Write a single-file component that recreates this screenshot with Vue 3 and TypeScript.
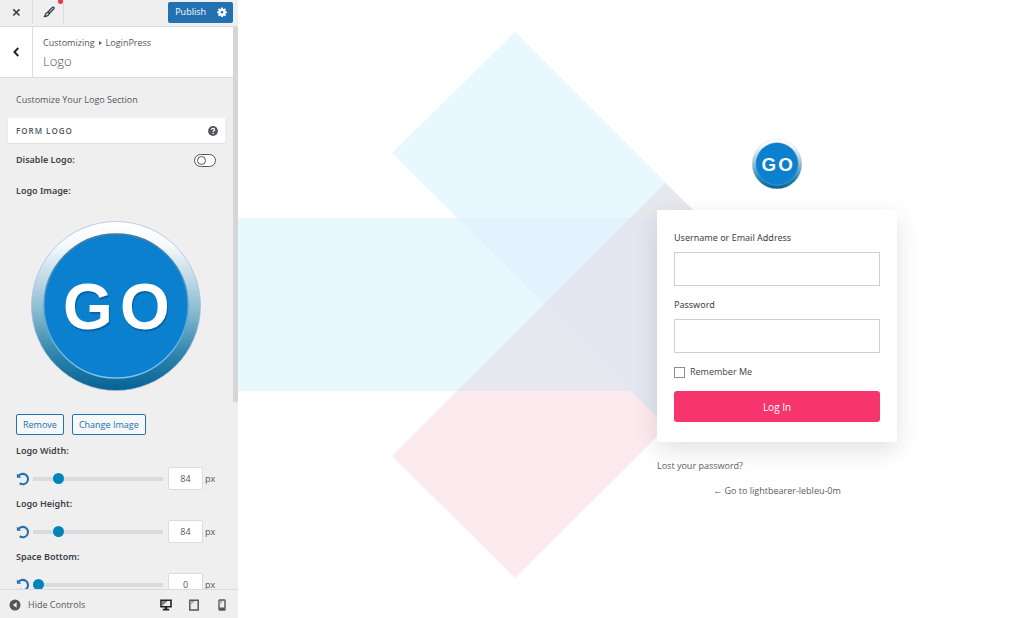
<script setup lang="ts">
import { ref } from 'vue'

interface SliderControl {
  id: string
  label: string
  value: number
  max: number
}

const sliders = ref<SliderControl[]>([
  { id: 'logo-width', label: 'Logo Width:', value: 84, max: 500 },
  { id: 'logo-height', label: 'Logo Height:', value: 84, max: 500 },
  { id: 'space-bottom', label: 'Space Bottom:', value: 0, max: 100 },
])
const defaults = sliders.value.map((s) => s.value)

const logoDisabled = ref(false)
const username = ref('')
const password = ref('')
const remember = ref(false)

function reset(index: number): void {
  sliders.value[index].value = defaults[index]
}
</script>

<template>
  <div class="app">
    <svg class="defs" width="0" height="0" aria-hidden="true">
      <defs>
        <linearGradient id="ring" x1="0" y1="0" x2="0" y2="1">
          <stop offset="0" stop-color="#ffffff" />
          <stop offset="0.14" stop-color="#f4f9fc" />
          <stop offset="0.5" stop-color="#93c0d4" />
          <stop offset="0.78" stop-color="#2f86ad" />
          <stop offset="1" stop-color="#066295" />
        </linearGradient>
        <linearGradient id="rim" x1="0" y1="0" x2="0" y2="1">
          <stop offset="0" stop-color="#47789c" />
          <stop offset="0.5" stop-color="#4f9fd0" />
          <stop offset="1" stop-color="#7cc4f2" />
        </linearGradient>
        <symbol id="go" viewBox="0 0 170 170">
          <circle cx="85" cy="85" r="84.5" fill="url(#ring)" stroke="#a9b9dc" stroke-opacity="0.7" />
          <circle cx="85" cy="85" r="72" fill="#0a80cf" stroke="url(#rim)" stroke-width="1.4" />
          <g font-family="'Liberation Sans', Arial, sans-serif" font-weight="700" font-size="64">
            <text x="33 90" y="110" fill="#075894" fill-opacity="0.7">GO</text>
            <text x="32 89" y="108" fill="#ffffff">GO</text>
          </g>
        </symbol>
      </defs>
    </svg>

    <aside class="sidebar">
      <header class="topbar">
        <button class="tool" type="button" aria-label="Close">
          <svg width="9" height="9" viewBox="0 0 9 9"><path d="M1.3 1.3l6.2 6.2M7.5 1.3L1.3 7.5" stroke="#3c434a" stroke-width="1.7" /></svg>
        </button>
        <button class="tool brush" type="button" aria-label="Styles">
          <svg width="12" height="12" viewBox="0 0 12 12">
            <path d="M5.200 5.700L9.300 1.500Q10.200.8 10.900 1.300Q11.400 2 10.600 3L6.600 7.200Z" fill="#eee" stroke="#3c434a" stroke-width="1.300" stroke-linejoin="round" />
            <path d="M4.900 6.100L2.700 7.700Q2.600 9.300 1.300 10.500Q3.600 10.700 4.900 9.600L6.400 7.500Z" fill="#eee" stroke="#3c434a" stroke-width="1.300" stroke-linejoin="round" />
          </svg>
          <span class="dot"></span>
        </button>
        <div class="publish">
          <button class="save" type="button">Publish</button>
          <button class="gear" type="button" aria-label="Publish settings">
            <svg width="10" height="10" viewBox="0 0 10 10">
              <path fill="#fff" fill-rule="evenodd" d="M4.2.4h1.6l.3 1.3.7.3 1.1-.7 1.1 1.1-.7 1.1.3.7 1.3.3v1.6l-1.3.3-.3.7.7 1.1-1.1 1.1-1.1-.7-.7.3-.3 1.3H4.2l-.3-1.3-.7-.3-1.1.7L1 8.2l.7-1.1-.3-.7L.1 6.1V4.5l1.3-.3.3-.7L1 2.4l1.1-1.1 1.1.7.7-.3zM5 3.9a1.300 1.300 0 1 0 0 2.600 1.300 1.300 0 0 0 0-2.600z" />
            </svg>
          </button>
        </div>
      </header>

      <div class="scroller">
        <div class="panel">
          <div class="heading">
            <button class="back" type="button" aria-label="Back">
              <svg width="8" height="10" viewBox="0 0 8 10"><path d="M6.300 1L2.400 5l3.900 4" fill="none" stroke="#1d2327" stroke-width="1.9" /></svg>
            </button>
            <div class="crumbs">
              <p class="path">Customizing <span class="arrow"></span> LoginPress</p>
              <h1>Logo</h1>
            </div>
          </div>

          <p class="intro">Customize Your Logo Section</p>

          <div class="group">
            <h2>FORM LOGO</h2>
            <button type="button" class="help" aria-label="Help">
              <svg width="10" height="10" viewBox="0 0 10 10"><circle cx="5" cy="5" r="4.9" fill="#50575e" /><path d="M3.4 3.8Q3.5 2.3 5 2.3Q6.6 2.3 6.6 3.7Q6.6 4.4 5.7 4.9Q5.1 5.2 5.1 6" fill="none" stroke="#fff" stroke-width="1.2" /><circle cx="5.1" cy="7.5" r=".75" fill="#fff" /></svg>
            </button>
          </div>

          <label class="switch-row">
            <span class="label">Disable Logo:</span>
            <input v-model="logoDisabled" class="switch" type="checkbox" />
          </label>

          <p class="label image-label">Logo Image:</p>
          <svg class="logo-large" width="170" height="170" role="img" aria-label="Logo"><use href="#go" /></svg>

          <div class="actions">
            <button type="button">Remove</button>
            <button type="button">Change Image</button>
          </div>

          <div v-for="(s, i) in sliders" :key="s.id" class="control">
            <label class="label" :for="s.id">{{ s.label }}</label>
            <div class="slider">
              <button class="reset" type="button" aria-label="Reset" @click="reset(i)">
                <svg width="14" height="14" viewBox="0 0 14 14">
                  <path d="M2.300 4.500A5.200 5.200 0 1 1 3.700 11.200" fill="none" stroke="#2271b1" stroke-width="2.100" />
                  <path d="M.9 1.500V5.800H5.200z" fill="#2271b1" />
                </svg>
              </button>
              <input :id="s.id" v-model.number="s.value" type="range" min="0" :max="s.max" />
              <input v-model.number="s.value" class="number" type="text" :aria-label="s.label + ' value'" />
              <span class="unit">px</span>
            </div>
          </div>
        </div>
        <div class="track"><div class="thumb"></div></div>
      </div>

      <footer class="footer">
        <button class="hide" type="button">
          <svg width="12" height="12" viewBox="0 0 12 12"><circle cx="6" cy="6" r="5.5" fill="#50575e" /><path d="M7.6 3.2v5.6L3.8 6z" fill="#eee" /></svg>
          <span>Hide Controls</span>
        </button>
        <div class="devices">
          <button type="button" aria-label="Desktop">
            <svg width="12" height="12" viewBox="0 0 12 12"><path d="M1 1.3h10v6.4H1z" fill="#eee" stroke="#1d2327" stroke-width="1.6" /><path d="M1.8 2h5.700L3 6.500H1.800z" fill="#888" /><path d="M4.8 8h2.4v1.7h2v1.8H2.8V9.700h2z" fill="#1d2327" /></svg>
          </button>
          <button type="button" aria-label="Tablet">
            <svg width="10" height="12" viewBox="0 0 10 12"><path d="M.8 1.200h8.400v9.800H.8z" fill="#eee" stroke="#50575e" stroke-width="1.500" /><path d="M1.500 2h4.500L1.500 6z" fill="#aaa" /></svg>
          </button>
          <button type="button" aria-label="Mobile">
            <svg width="8" height="12" viewBox="0 0 8 12"><rect x="1" y="1" width="6" height="10" rx=".6" fill="#eee" stroke="#50575e" stroke-width="1.400" /><path d="M1.500 2h3.500L1.500 6z" fill="#aaa" /><path d="M1.500 8.500h5V11h-5z" fill="#50575e" /></svg>
          </button>
        </div>
      </footer>
    </aside>

    <main class="preview">
      <svg class="backdrop" viewBox="238 0 786 618" preserveAspectRatio="xMinYMin slice" aria-hidden="true">
        <path d="M238 218H631V391H238z" fill="#e8f8ff" />
        <path d="M515 32L696 213V430H670L392 153z" fill="#e8f8ff" />
        <path d="M457 218H631V391z" fill="#e4f2fe" />
        <path d="M392 456L665 183L696 213V398L515 578z" fill="#fdeaee" />
        <path d="M457 391L665 183L696 213V430H670L631 391z" fill="#e7e7ee" />
        <path d="M544 304L630 218H696V430H670z" fill="#e4e7f1" />
      </svg>

      <div class="login">
        <svg class="logo-small" width="50" height="50" role="img" aria-label="Logo"><use href="#go" /></svg>
        <form class="card" @submit.prevent>
          <label class="field-label" for="user">Username or Email Address</label>
          <input id="user" v-model="username" class="field" type="text" />
          <label class="field-label" for="pass">Password</label>
          <input id="pass" v-model="password" class="field" type="password" />
          <label class="remember"><input v-model="remember" type="checkbox" /> Remember Me</label>
          <button class="submit" type="submit">Log In</button>
        </form>
        <a class="lost" href="#">Lost your password?</a>
        <a class="home" href="#">← Go to lightbearer-lebleu-0m</a>
      </div>
    </main>
  </div>
</template>

<style>
body {
  background: #fff;
}
</style>

<style scoped>
.app,
.app * {
  box-sizing: border-box;
}
.app {
  display: flex;
  height: 100vh;
  font-family: 'Open Sans', 'Noto Sans', sans-serif;
  font-size: 9px;
  line-height: 14px;
  color: #50575e;
}
button,
input {
  font: inherit;
  color: inherit;
  margin: 0;
  padding: 0;
}
button {
  border: 0;
  background: none;
}
p,
h1,
h2 {
  margin: 0;
}
svg {
  display: block;
}
.defs {
  position: absolute;
}

.sidebar {
  display: flex;
  flex-direction: column;
  flex: 0 0 238px;
  background: #efefef;
}
.topbar {
  display: flex;
  align-items: center;
  height: 27px;
  flex: none;
  padding: 0 5px 2px 0;
  border-bottom: 1px solid #dcdcde;
}
.tool {
  display: flex;
  align-items: center;
  justify-content: center;
  align-self: stretch;
  width: 33px;
  border-right: 1px solid #dcdcde;
}
.brush {
  position: relative;
  width: 31px;
  padding-left: 2px;
}
.dot {
  position: absolute;
  top: -1px;
  right: 0;
  width: 5px;
  height: 5px;
  border-radius: 50%;
  background: #f0344a;
}
.publish {
  display: flex;
  align-items: center;
  height: 21px;
  margin-left: auto;
  background: #2271b1;
  border-radius: 2px;
  color: #fff;
}
.save {
  padding-left: 7px;
}
.gear {
  display: flex;
  padding: 0 6px 0 11px;
}

.scroller {
  display: flex;
  flex: 1;
  min-height: 0;
}
.panel {
  flex: 1;
  overflow: hidden;
}
.track {
  width: 5px;
}
.thumb {
  height: 375px;
  background: #d6d6d8;
}
.heading {
  display: flex;
  height: 51px;
  background: #fff;
  border-bottom: 1px solid #dcdcde;
}
.back {
  display: flex;
  align-items: center;
  justify-content: center;
  width: 33px;
  border-right: 1px solid #dcdcde;
}
.crumbs {
  padding: 9px 10px;
}
.path {
  display: flex;
  align-items: center;
  gap: 4px;
}
.arrow {
  border: 2px solid transparent;
  border-left: 3px solid #50575e;
  border-right: 0;
}
h1 {
  font-size: 13px;
  font-weight: 300;
  line-height: 22px;
}
.intro {
  padding: 15px 16px 11px;
}
.group {
  display: flex;
  align-items: center;
  justify-content: space-between;
  height: 25px;
  margin: 0 8px;
  padding: 0 7px 0 8px;
  background: #fff;
  box-shadow: 0 1px 1px #e0e0e2;
}
h2 {
  font-size: 8px;
  font-weight: 600;
  letter-spacing: 1px;
}
.label,
.field-label {
  font-family: 'Noto Sans', 'Open Sans', sans-serif;
}
.label {
  display: block;
  font-weight: 600;
  color: #3c434a;
}
.switch-row {
  display: flex;
  align-items: center;
  justify-content: space-between;
  height: 14px;
  margin: 10px 17px 0 16px;
}
.switch {
  appearance: none;
  display: flex;
  align-items: center;
  width: 22px;
  height: 13px;
  padding-left: 2px;
  background: #fff;
  border: 1px solid #50575e;
  border-radius: 7px;
}
.switch::before {
  content: '';
  width: 7px;
  height: 7px;
  border: 1px solid #50575e;
  border-radius: 50%;
}
.switch:checked {
  justify-content: flex-end;
}
.image-label {
  margin: 17px 16px 23px;
}
.logo-large {
  margin-left: 31px;
}
.actions {
  display: flex;
  gap: 8px;
  padding: 23px 16px 9px;
}
.actions button {
  height: 21px;
  padding: 0 6px;
  border: 1px solid #2271b1;
  border-radius: 2px;
  background: #f6f7f7;
  color: #2271b1;
}
.control {
  padding: 0 16px;
  margin-bottom: 7px;
}
.slider {
  display: flex;
  align-items: center;
  height: 23px;
  margin-top: 9px;
}
.reset {
  width: 17px;
}
.slider input[type='range'] {
  appearance: none;
  width: 130px;
  height: 11px;
  background: linear-gradient(#d9dbde, #d9dbde) center / 100% 4px no-repeat;
}
.slider input[type='range']::-webkit-slider-thumb {
  appearance: none;
  width: 11px;
  height: 11px;
  border-radius: 50%;
  background: #0085ba;
}
.number {
  width: 35px;
  height: 23px;
  margin: 0 2px 0 5px;
  text-align: center;
  background: #fff;
  border: 1px solid #dcdcde;
  border-radius: 2px;
}
.footer {
  display: flex;
  align-items: center;
  justify-content: space-between;
  flex: none;
  height: 29px;
  padding: 2px 10px 0 9px;
  border-top: 1px solid #dcdcde;
}
.hide {
  display: flex;
  align-items: center;
  gap: 7px;
}
.devices {
  display: flex;
  gap: 16px;
}
.devices button {
  display: flex;
  justify-content: center;
  width: 12px;
}

.preview {
  position: relative;
  display: flex;
  flex: 1;
  justify-content: flex-end;
  align-items: flex-start;
  overflow: hidden;
  padding: 139px 127px 0 0;
}
.backdrop {
  position: absolute;
  inset: 0;
  width: 100%;
  height: 100%;
}
.login {
  position: relative;
  display: flex;
  flex-direction: column;
  width: 240px;
}
.logo-small {
  align-self: center;
  margin-bottom: 21px;
}
.card {
  display: flex;
  flex-direction: column;
  padding: 21px 17px 20px;
  background: #fff;
  color: #3c434a;
  box-shadow: 0 8px 24px rgba(0, 0, 0, 0.12);
}
.field {
  width: 100%;
  height: 34px;
  margin: 7px 0 12px;
  padding: 0 8px;
  background: #fff;
  border: 1px solid #cfcfcf;
}
.remember {
  display: flex;
  align-items: center;
  gap: 5px;
}
.remember input {
  appearance: none;
  width: 11px;
  height: 11px;
  background: #fff;
  border: 1px solid #8c8f94;
}
.remember input:checked {
  background: #f7356d;
}
.submit {
  height: 31px;
  margin-top: 12px;
  border-radius: 3px;
  background: #f7356d;
  color: #fff;
  font-size: 10px;
}
.lost,
.home {
  color: #555d66;
  text-decoration: none;
}
.lost {
  align-self: flex-start;
  margin-top: 17px;
}
.home {
  align-self: center;
  margin-top: 11px;
}
</style>
